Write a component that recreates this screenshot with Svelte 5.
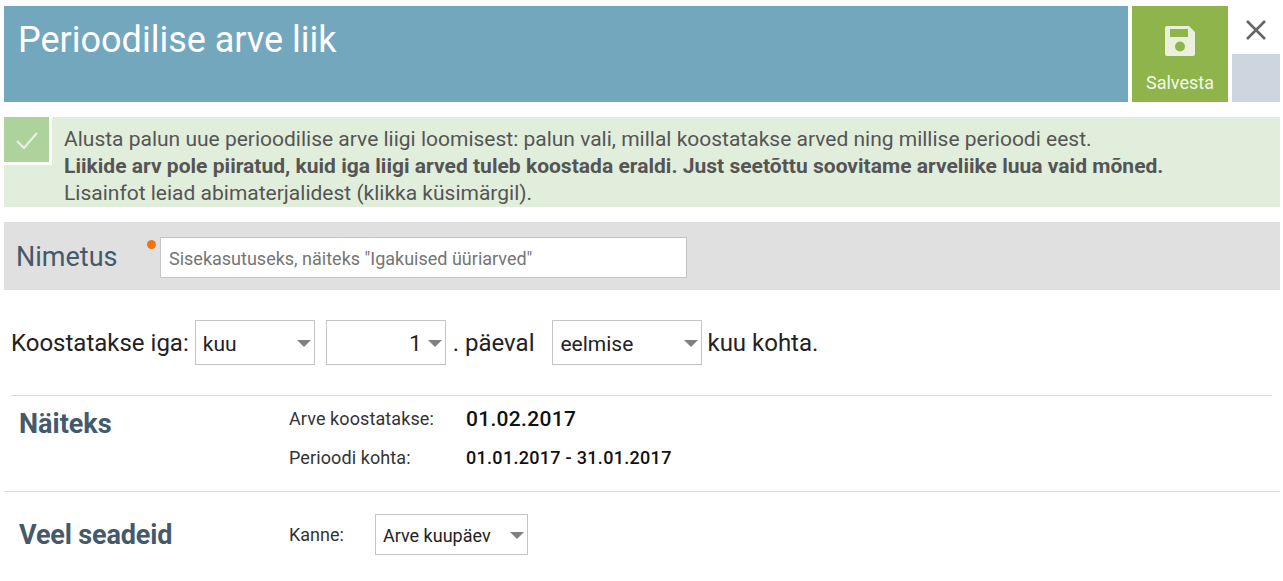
<script>
  let name = $state("");
</script>

<div class="page">
  <header class="top">
    <div class="title"><h1>Perioodilise arve liik</h1></div>
    <button class="save">
      <svg width="32" height="32" viewBox="0 0 32 32" class="save-icon">
        <path fill="#e9f0dc" fill-rule="evenodd" d="M3 1h22l6 6v22a2 2 0 0 1-2 2H3a2 2 0 0 1-2-2V3a2 2 0 0 1 2-2zM6 4v8h18V4zM16 16.500a5 5 0 1 0 0 10 5 5 0 0 0 0-10z"/>
      </svg>
      <span>Salvesta</span>
    </button>
    <div class="side">
      <button class="close" aria-label="Sulge">
        <svg width="22" height="22" viewBox="0 0 22 22" fill="none" stroke="#666" stroke-width="2.6">
          <path d="M2 2l18 18M20 2L2 20"/>
        </svg>
      </button>
      <div class="side-fill"></div>
    </div>
  </header>

  <section class="notice">
    <div class="check">
      <svg width="24" height="24" viewBox="0 0 24 24" fill="none" stroke="#eaf3e2" stroke-width="2">
        <path d="M2 13l7 7L22 5"/>
      </svg>
    </div>
    <p>
      Alusta palun uue perioodilise arve liigi loomisest: palun vali, millal koostatakse arved ning millise perioodi eest.<br />
      <b>Liikide arv pole piiratud, kuid iga liigi arved tuleb koostada eraldi. Just seetõttu soovitame arveliike luua vaid mõned.</b><br />
      Lisainfot leiad abimaterjalidest (klikka küsimärgil).
    </p>
  </section>

  <section class="name-bar">
    <label for="nimetus">Nimetus</label>
    <div class="name-field">
      <span class="dot"></span>
      <input id="nimetus" type="text" placeholder={'Sisekasutuseks, näiteks "Igakuised üüriarved"'} bind:value={name} />
    </div>
  </section>

  <section class="schedule">
    <span class="lead">Koostatakse iga:</span>
    <div class="pick w120"><select><option>kuu</option></select></div>
    <div class="pick w120 num"><select><option>1</option></select></div>
    <span class="dotted">. päeval</span>
    <div class="pick w150"><select><option>eelmise</option></select></div>
    <span>kuu kohta.</span>
  </section>

  <section class="example">
    <h2>Näiteks</h2>
    <div class="example-grid">
      <span class="key">Arve koostatakse:</span>
      <strong class="big">01.02.2017</strong>
      <span class="key">Perioodi kohta:</span>
      <strong class="small">01.01.2017 - 31.01.2017</strong>
    </div>
  </section>

  <section class="more">
    <h2>Veel seadeid</h2>
    <span class="key kanne">Kanne:</span>
    <div class="pick w153 short"><select><option>Arve kuupäev</option></select></div>
  </section>
</div>

<style>
  :global(body) {
    margin: 0;
    background: #fff;
    font-family: Roboto, "Liberation Sans", sans-serif;
    overflow: hidden;
  }

  .page {
    padding: 6px 3px 0 4px;
    color: #222;
  }

  .top {
    display: flex;
    gap: 4px;
    height: 96px;
  }

  .title {
    flex: 1;
    background: #73a7be;
    padding: 15px 15px;
  }

  h1 {
    margin: 0 0 0 -1px;
    font-size: 36px;
    line-height: 38px;
    font-weight: 400;
    color: #fff;
  }

  .save {
    width: 96px;
    border: 0;
    padding: 19px 0 0;
    background: #8fb44b;
    color: #f4f8ec;
    font: inherit;
    font-size: 18px;
    display: flex;
    flex-direction: column;
    align-items: center;
  }

  .save-icon {
    margin-bottom: 15px;
  }

  .side {
    width: 48px;
    display: flex;
    flex-direction: column;
  }

  .close {
    height: 48px;
    border: 0;
    padding: 0;
    background: #fff;
    display: flex;
    align-items: center;
    justify-content: center;
  }

  .side-fill {
    flex: 1;
    background: #cdd6df;
  }

  .notice {
    display: flex;
    margin-top: 15px;
    height: 90px;
    background: #e1eedb;
  }

  .check {
    width: 45px;
    height: 45px;
    flex-shrink: 0;
    background: #aed29c;
    border-right: 3px solid #fff;
    border-bottom: 3px solid #fff;
    display: flex;
    align-items: center;
    justify-content: center;
  }

  .notice p {
    margin: 9px 0 0 12px;
    font-size: 21px;
    line-height: 27px;
    color: #555;
    white-space: nowrap;
  }

  .notice b {
    font-weight: 700;
    letter-spacing: 0.02px;
  }

  .name-bar {
    display: flex;
    align-items: center;
    margin-top: 15px;
    height: 68px;
    background: #e0e0e0;
    padding: 3px 0 0 12px;
    box-sizing: border-box;
  }

  .name-bar label {
    width: 144px;
    font-size: 27px;
    color: #44596a;
    margin-top: -2px;
  }

  .name-field {
    position: relative;
    display: flex;
  }

  .dot {
    position: absolute;
    left: -13px;
    top: 3px;
    width: 9px;
    height: 9px;
    border-radius: 50%;
    background: #f07314;
  }

  input {
    box-sizing: border-box;
    width: 527px;
    height: 41px;
    border: 1px solid #c4c4c4;
    padding: 1px 8px 0;
    font: inherit;
    font-size: 18px;
    outline: none;
  }

  input::placeholder {
    color: #757575;
    opacity: 1;
  }

  .schedule {
    display: flex;
    align-items: center;
    height: 45px;
    margin-top: 30px;
    padding-left: 7px;
    font-size: 24px;
  }

  .lead {
    margin-right: 6px;
  }

  .dotted {
    margin: 0 18px 0 7px;
  }

  .schedule > span:last-child {
    margin-left: 5px;
  }

  .pick {
    position: relative;
    height: 45px;
  }

  .pick::after {
    content: "";
    position: absolute;
    right: 4px;
    top: 50%;
    margin-top: -3px;
    border: 7px solid transparent;
    border-top: 7px solid #808080;
    border-bottom: 0;
    pointer-events: none;
  }

  .w120 {
    width: 120px;
    margin-right: 11px;
  }

  .w120 + .w120 {
    margin-right: 0;
  }

  .w150 {
    width: 150px;
  }

  .w153 {
    width: 153px;
  }

  select {
    appearance: none;
    box-sizing: border-box;
    width: 100%;
    height: 100%;
    border: 1px solid #c4c4c4;
    border-radius: 0;
    background: #fff;
    padding: 2px 7px 0;
    font: inherit;
    font-size: 21px;
    color: #222;
    outline: none;
  }

  .num select {
    text-align-last: right;
    padding-right: 23px;
    font-size: 22px;
  }

  .example {
    display: flex;
    margin: 30px 8px 0 7px;
    height: 96px;
    border-top: 1px solid #ddd;
    box-sizing: border-box;
  }

  h2 {
    margin: 0;
    font-size: 27px;
    font-weight: 700;
    color: #44596a;
    white-space: nowrap;
  }

  .example h2 {
    width: 278px;
    padding: 12px 0 0 8px;
    box-sizing: border-box;
  }

  .example-grid {
    display: grid;
    grid-template-columns: 177px auto;
    grid-auto-rows: 39px;
    padding-top: 3px;
    align-items: center;
    justify-content: start;
  }

  .key {
    font-size: 18px;
    color: #333;
    white-space: nowrap;
    letter-spacing: 0.1px;
  }

  .big {
    font-size: 21px;
    font-weight: 500;
    color: #111;
    letter-spacing: 0.3px;
  }

  .small {
    font-size: 18px;
    font-weight: 500;
    color: #111;
    letter-spacing: 0.3px;
  }

  .more {
    display: flex;
    align-items: center;
    border-top: 1px solid #ddd;
    height: 86px;
    box-sizing: border-box;
    padding: 0 0 0 15px;
  }

  .more h2 {
    width: 270px;
    letter-spacing: -0.15px;
  }

  .kanne {
    width: 86px;
    letter-spacing: 0;
  }

  .short {
    height: 41px;
  }

  .short select {
    font-size: 18px;
  }
</style>
